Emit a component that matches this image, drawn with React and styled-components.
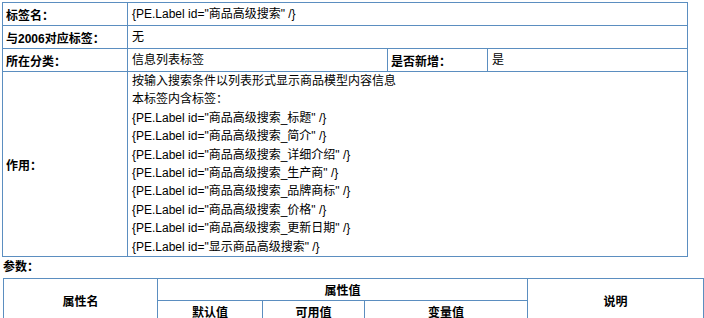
import React from 'react';
import styled, { createGlobalStyle } from 'styled-components';

const GlobalStyle = createGlobalStyle`
  body {
    margin: 0;
    background: #fff;
    font-family: "Liberation Sans", "Noto Sans CJK SC", sans-serif;
    font-size: 12px;
    color: #000;
  }
`;

const Page = styled.div`
  padding: 2px 0 0 2px;
`;

const Grid = styled.table`
  border-collapse: collapse;
  width: ${p => p.$width}px;
  margin-left: ${p => p.$indent || 0}px;
  table-layout: fixed;
`;

const Col = styled.col`
  width: ${p => p.$w}px;
`;

const Label = styled.td`
  border: 1px solid #5b8ec0;
  font-weight: bold;
  padding: 0 3px;
  height: 22px;
  white-space: nowrap;
`;

const Value = styled.td`
  border: 1px solid #5b8ec0;
  padding: 0 4px;
  height: 22px;
  line-height: 18.4px;
  vertical-align: middle;
`;

const Caption = styled.div`
  font-weight: bold;
  height: 21px;
  line-height: 21px;
  padding-left: 1px;
`;

const Head = styled.th`
  border: 1px solid #5b8ec0;
  font-weight: bold;
  text-align: center;
  height: 21px;
  padding: 0;
`;

const usage = [
  '按输入搜索条件以列表形式显示商品模型内容信息',
  '本标签内含标签：',
  '{PE.Label id="商品高级搜索_标题" /}',
  '{PE.Label id="商品高级搜索_简介" /}',
  '{PE.Label id="商品高级搜索_详细介绍" /}',
  '{PE.Label id="商品高级搜索_生产商" /}',
  '{PE.Label id="商品高级搜索_品牌商标" /}',
  '{PE.Label id="商品高级搜索_价格" /}',
  '{PE.Label id="商品高级搜索_更新日期" /}',
  '{PE.Label id="显示商品高级搜索" /}',
];

export default function App() {
  return (
    <Page>
      <GlobalStyle />
      <Grid $width={685}>
        <colgroup>
          <Col $w={125} />
          <Col $w={260} />
          <Col $w={100} />
          <Col $w={200} />
        </colgroup>
        <tbody>
          <tr>
            <Label>标签名：</Label>
            <Value colSpan={3}>{'{PE.Label id="商品高级搜索" /}'}</Value>
          </tr>
          <tr>
            <Label>与2006对应标签：</Label>
            <Value colSpan={3}>无</Value>
          </tr>
          <tr>
            <Label>所在分类：</Label>
            <Value>信息列表标签</Value>
            <Label>是否新增：</Label>
            <Value>是</Value>
          </tr>
          <tr>
            <Label>作用：</Label>
            <Value colSpan={3}>
              {usage.map(line => (
                <div key={line}>{line}</div>
              ))}
            </Value>
          </tr>
        </tbody>
      </Grid>
      <Caption>参数：</Caption>
      <Grid $width={700} $indent={1}>
        <colgroup>
          <Col $w={154} />
          <Col $w={105} />
          <Col $w={102} />
          <Col $w={163} />
          <Col $w={176} />
        </colgroup>
        <thead>
          <tr>
            <Head rowSpan={2}>属性名</Head>
            <Head colSpan={3}>属性值</Head>
            <Head rowSpan={2}>说明</Head>
          </tr>
          <tr>
            <Head>默认值</Head>
            <Head>可用值</Head>
            <Head>变量值</Head>
          </tr>
        </thead>
      </Grid>
    </Page>
  );
}
